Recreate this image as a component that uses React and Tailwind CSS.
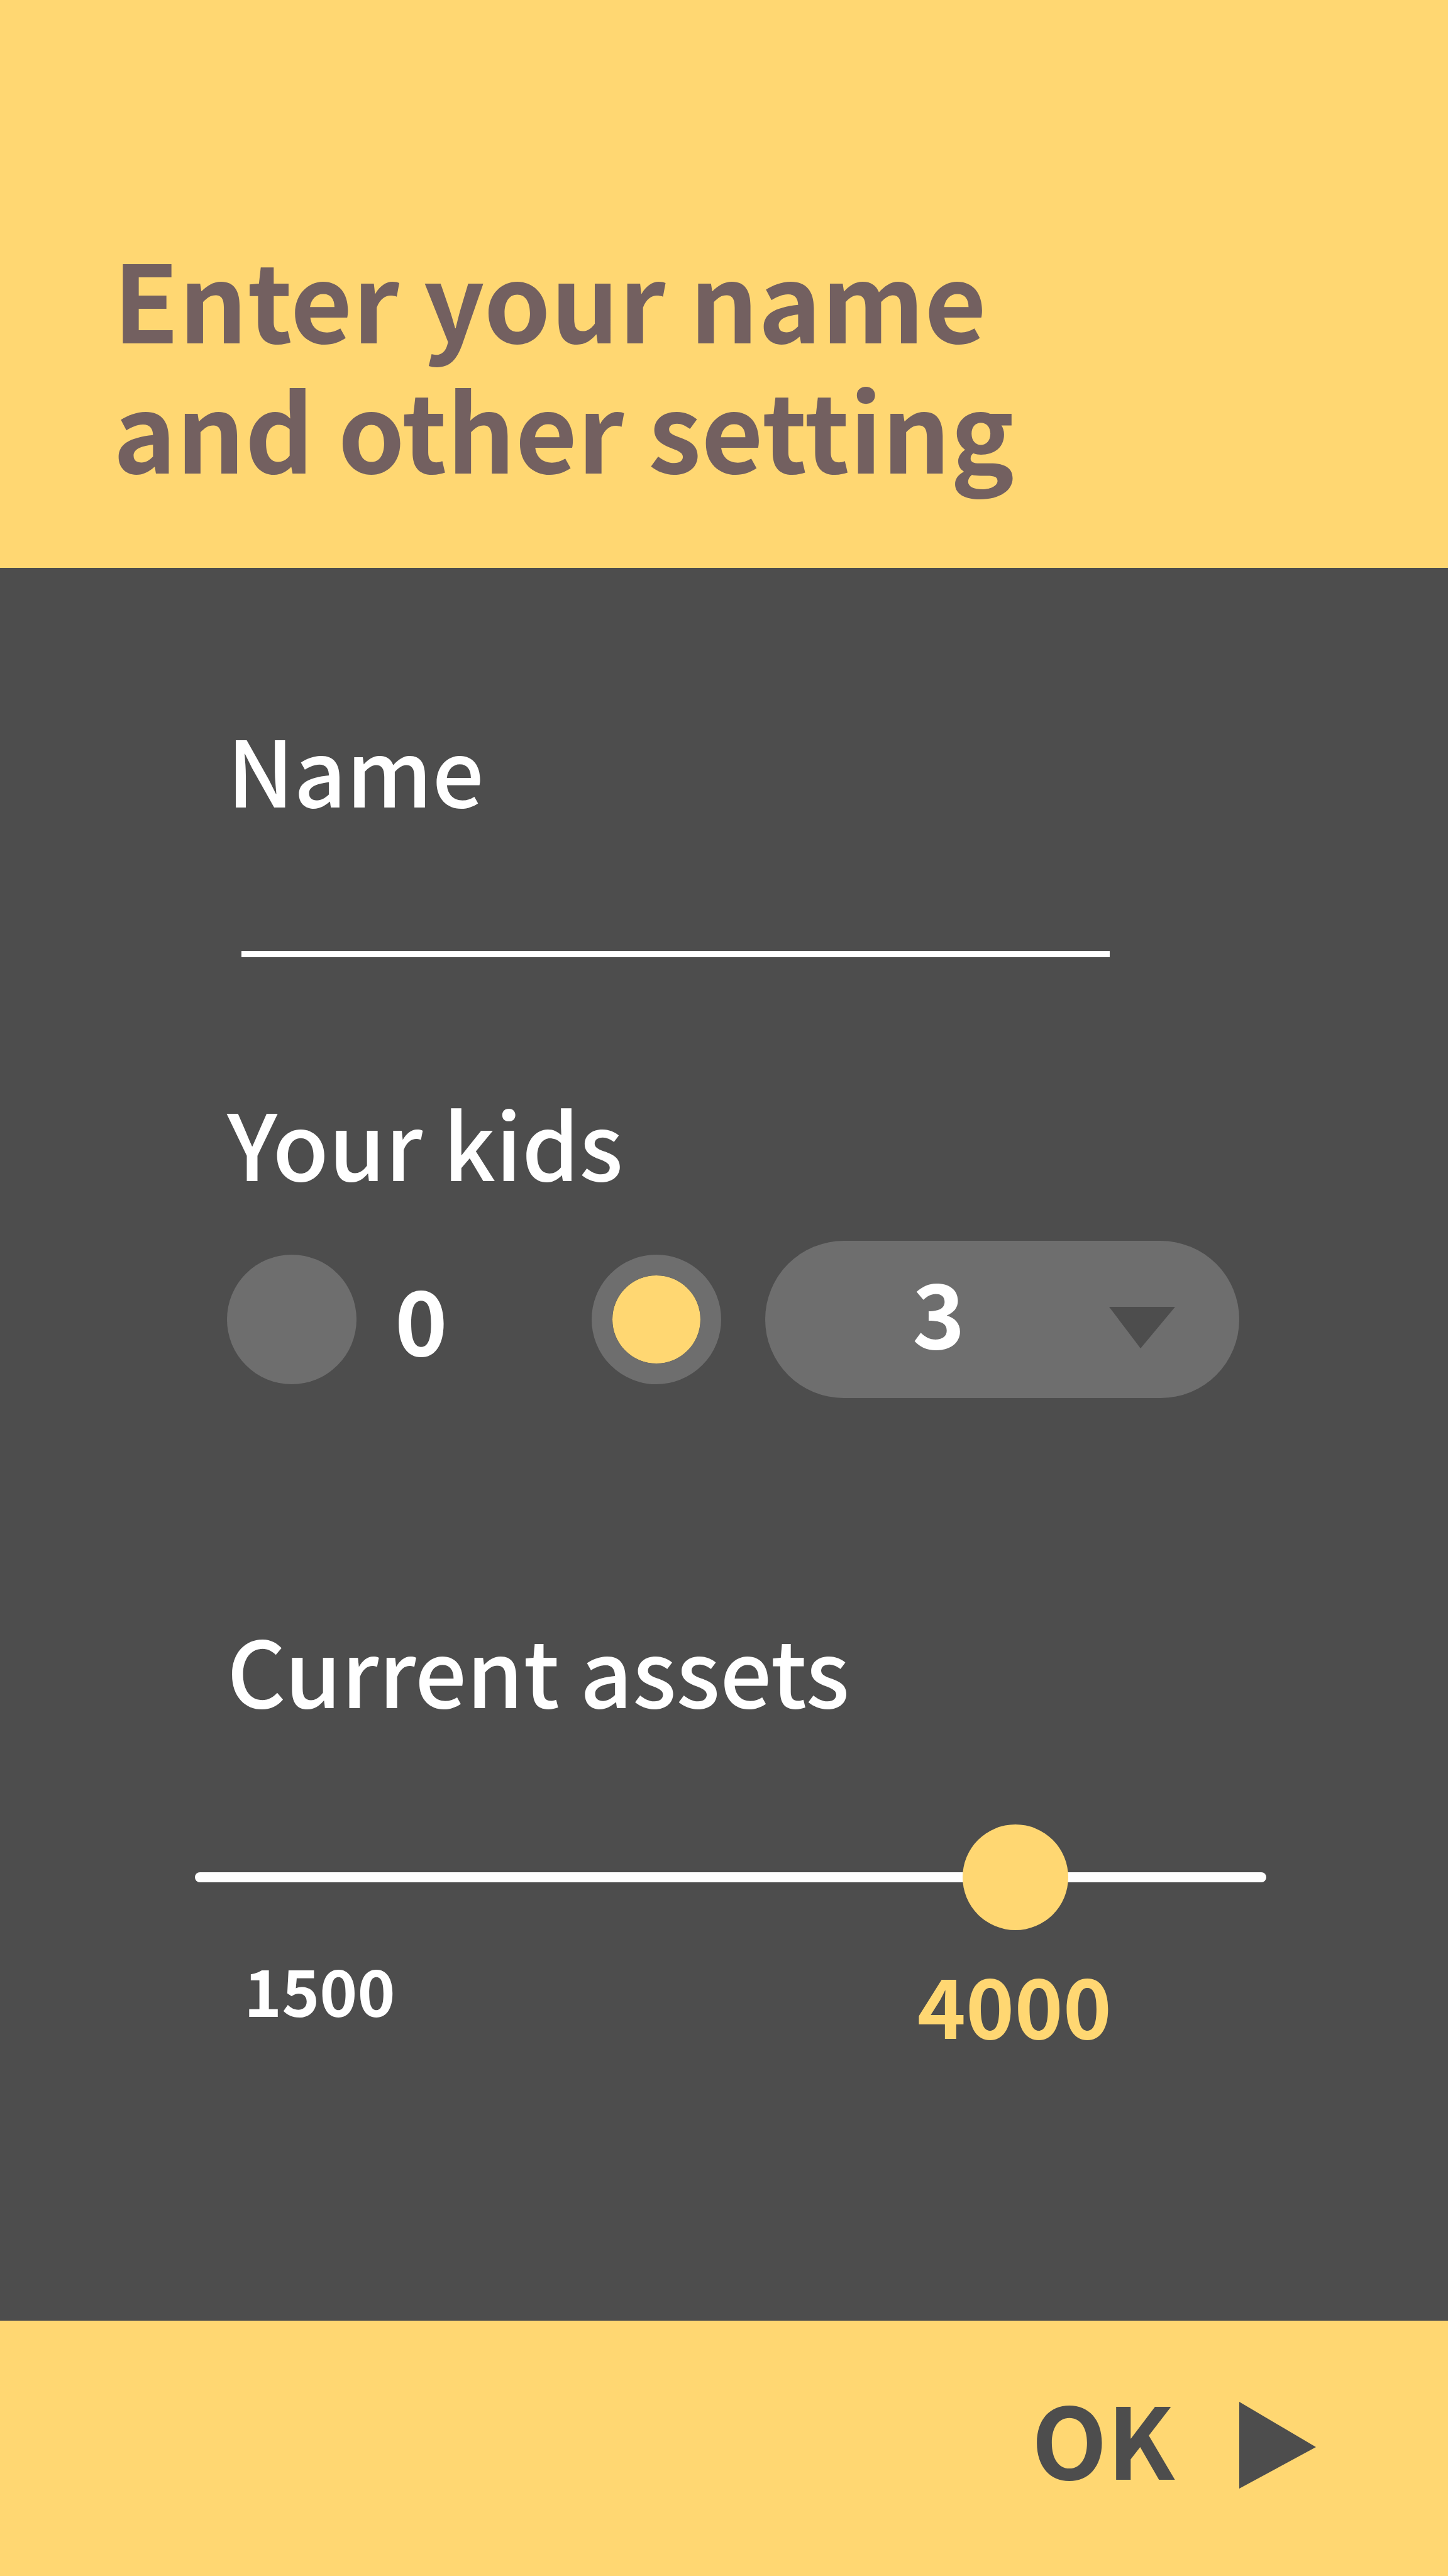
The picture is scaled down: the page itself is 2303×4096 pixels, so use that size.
import { useState } from "react";

function FieldLabel({ htmlFor, children }) {
  return (
    <label htmlFor={htmlFor} className="block text-[145px] leading-[144px] font-medium">
      {children}
    </label>
  );
}

const radioClass =
  "size-[206px] shrink-0 appearance-none rounded-full bg-[#6e6e6e] bg-clip-padding checked:border-[33px] checked:border-[#6e6e6e] checked:bg-[#ffd772]";

export default function App() {
  const [name, setName] = useState("");
  const [hasKids, setHasKids] = useState(true);
  const [kids, setKids] = useState("3");
  const [assets, setAssets] = useState(4000);

  return (
    <form
      className="flex min-h-screen flex-col bg-[#4d4d4d] font-['Noto_Sans_CJK_JP','Noto_Sans',sans-serif] text-white"
      onSubmit={(event) => event.preventDefault()}
    >
      <header className="bg-[#ffd772] px-[180px] pt-[369px] pb-[120px]">
        <h1 className="text-[170px] leading-[207px] font-bold text-[#736060]">
          Enter your name
          <br />
          and other setting
        </h1>
      </header>

      <main className="flex-1 pt-[246px] pr-[289px] pl-[310px]">
        <section className="pr-[249px] pl-[51px]">
          <FieldLabel htmlFor="name">Name</FieldLabel>
          <div className="pl-[23px]">
            <input
              id="name"
              type="text"
              value={name}
              onChange={(event) => setName(event.target.value)}
              className="block h-[229px] w-full border-b-[10px] border-white bg-transparent text-[145px] outline-none"
            />
          </div>
        </section>

        <section className="mt-[221px] pr-[43px] pl-[51px]">
          <FieldLabel htmlFor="kids">Your kids</FieldLabel>
          <div className="mt-[86px] flex items-center">
            <label className="flex w-[580px] items-center gap-[61px]">
              <input
                type="radio"
                name="kids-choice"
                checked={!hasKids}
                onChange={() => setHasKids(false)}
                className={radioClass}
              />
              <span className="pb-2 text-[142px] leading-[144px] font-bold">0</span>
            </label>
            <input
              type="radio"
              name="kids-choice"
              aria-label="One or more kids"
              checked={hasKids}
              onChange={() => setHasKids(true)}
              className={radioClass}
            />
            <div className="ml-[70px] grid flex-1 items-center">
              <select
                id="kids"
                value={kids}
                onChange={(event) => setKids(event.target.value)}
                className="col-start-1 row-start-1 h-[250px] w-full appearance-none rounded-full bg-[#6e6e6e] pb-[30px] pl-[234px] text-[142px] font-bold outline-none"
              >
                <option>1</option>
                <option>2</option>
                <option>3</option>
                <option>4</option>
              </select>
              <svg
                viewBox="0 0 105 66"
                aria-hidden="true"
                className="pointer-events-none col-start-1 row-start-1 mt-[26px] mr-[102px] w-[105px] justify-self-end"
              >
                <path d="M0 0H105L50 66Z" fill="#4d4d4d" />
              </svg>
            </div>
          </div>
        </section>

        <section className="mt-[358px]">
          <div className="pl-[51px]">
            <FieldLabel htmlFor="assets">Current assets</FieldLabel>
          </div>
          <input
            id="assets"
            type="range"
            min="1500"
            max="4645"
            step="5"
            value={assets}
            onChange={(event) => setAssets(Number(event.target.value))}
            className="mt-[176px] block h-[168px] w-full appearance-none bg-transparent outline-none [&::-webkit-slider-runnable-track]:h-4 [&::-webkit-slider-runnable-track]:rounded-full [&::-webkit-slider-runnable-track]:bg-white [&::-webkit-slider-thumb]:-mt-[76px] [&::-webkit-slider-thumb]:size-[168px] [&::-webkit-slider-thumb]:appearance-none [&::-webkit-slider-thumb]:rounded-full [&::-webkit-slider-thumb]:bg-[#ffd772]"
          />
          <div className="mt-[45px] flex items-start justify-between pr-[246px] pl-[78px] font-bold">
            <span className="text-[102px] leading-[98px]">1500</span>
            <output htmlFor="assets" className="text-[131px] leading-[142px] text-[#ffd772]">
              {assets}
            </output>
          </div>
        </section>
      </main>

      <footer className="flex h-[406px] justify-end bg-[#ffd772] pt-[129px] pr-[210px]">
        <button
          type="submit"
          className="flex items-start gap-[103px] text-[156px] leading-[112px] font-bold text-[#4d4d4d]"
        >
          OK
          <svg viewBox="0 0 122 138" aria-hidden="true" className="w-[122px]">
            <path d="M0 0L122 72L0 138Z" fill="currentColor" />
          </svg>
        </button>
      </footer>
    </form>
  );
}
